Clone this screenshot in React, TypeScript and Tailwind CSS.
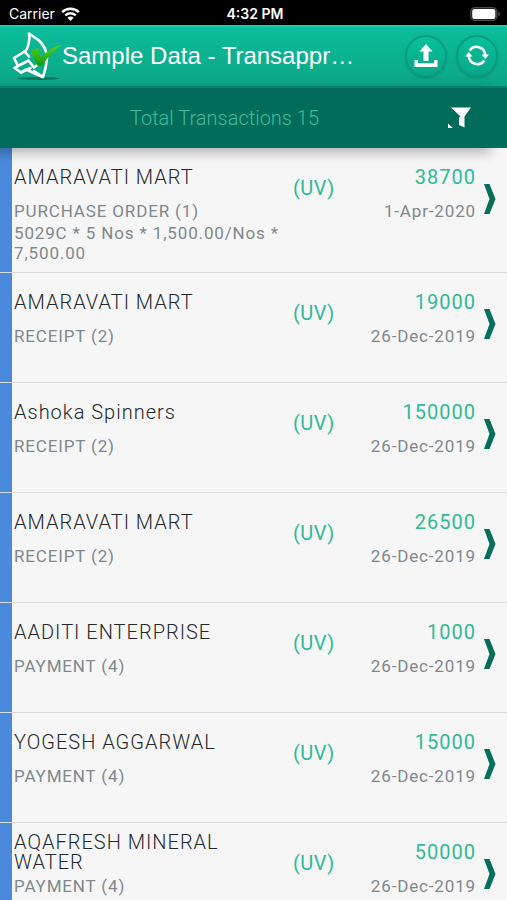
import React from 'react';

interface Transaction {
  id: number;
  party: string;
  voucher: string;
  detail?: string;
  amount: string;
  date: string;
}

const transactions: Transaction[] = [
  { id: 1, party: 'AMARAVATI MART', voucher: 'PURCHASE ORDER (1)', detail: '5029C * 5 Nos * 1,500.00/Nos * 7,500.00', amount: '38700', date: '1-Apr-2020' },
  { id: 2, party: 'AMARAVATI MART', voucher: 'RECEIPT (2)', amount: '19000', date: '26-Dec-2019' },
  { id: 3, party: 'Ashoka Spinners', voucher: 'RECEIPT (2)', amount: '150000', date: '26-Dec-2019' },
  { id: 4, party: 'AMARAVATI MART', voucher: 'RECEIPT (2)', amount: '26500', date: '26-Dec-2019' },
  { id: 5, party: 'AADITI ENTERPRISE', voucher: 'PAYMENT (4)', amount: '1000', date: '26-Dec-2019' },
  { id: 6, party: 'YOGESH AGGARWAL', voucher: 'PAYMENT (4)', amount: '15000', date: '26-Dec-2019' },
  { id: 7, party: 'AQAFRESH MINERAL WATER', voucher: 'PAYMENT (4)', amount: '50000', date: '26-Dec-2019' },
];

const StatusBar = () => (
  <div className="grid grid-cols-3 items-center h-[25px] shrink-0 pt-[3px] pl-[9px] pr-[6px] bg-black text-white text-sm leading-5 font-['Inter',sans-serif]">
    <div className="flex items-center gap-1.5">
      <span>Carrier</span>
      <svg width="19" height="14" viewBox="0 0 19 14" fill="none" stroke="white" strokeWidth="2.5">
        <path d="M1.2 5.2a11.8 11.8 0 0 1 16.6 0" />
        <path d="M4.2 8.4a7.5 7.5 0 0 1 10.6 0" />
        <path d="M9.5 14 6.4 10.8a4.4 4.4 0 0 1 6.2 0z" fill="white" stroke="none" />
      </svg>
    </div>
    <span className="text-center font-semibold">4:32 PM</span>
    <svg className="justify-self-end" width="31" height="14" viewBox="0 0 31 14">
      <rect x="0.8" y="0.8" width="26" height="12.4" rx="4" fill="none" stroke="#4a4a4a" strokeWidth="1.4" />
      <rect x="2.2" y="2" width="23.2" height="10" rx="2" fill="white" />
      <path d="M28.3 4.6c2.4.8 2.4 4 0 4.8z" fill="#4a4a4a" />
    </svg>
  </div>
);

const Logo = () => (
  <svg className="shrink-0" width="50" height="50" viewBox="0 0 50 50" fill="none">
    <defs>
      <linearGradient id="tick" x1="0" y1="0" x2="0" y2="1">
        <stop offset="0" stopColor="#5fd21c" />
        <stop offset="1" stopColor="#0b9a10" />
      </linearGradient>
    </defs>
    <ellipse cx="26" cy="47.500" rx="21" ry="1.4" fill="#04604c" opacity="0.7" />
    <g stroke="white" strokeWidth="2.6" strokeLinejoin="round" strokeLinecap="round">
      <path d="M13 21C16 17 18.500 9 17 2.500L27 9.500c5 5 8 10 8 17-.5 8-2 14-4 19.500L22 40" />
      <path d="M12.500 20.500 2 27l4 8L16.500 29.500 22 36.500 28 32" />
      <path d="M12.500 20.500 17 25.500" />
      <path d="M6 35 2.500 37l6.500 4.500 9.500-4.500" />
      <path d="M9 41.500 14 38.500 30.500 46" />
    </g>
    <path d="M18.500 20 26 17l3.500 9.500C35 19.500 41 16 50 13.500 41 20 35 26.500 30.500 35L25 34.500z" fill="url(#tick)" />
  </svg>
);

const UploadIcon = () => (
  <svg width="24" height="24" viewBox="0 0 24 24" fill="white">
    <path d="M12 0 18.500 7.500h-4V17h-5V7.500h-4z" />
    <path d="M.5 16h3.500v3.200h16V16h3.500v7H.5z" />
  </svg>
);

const SyncIcon = () => (
  <svg width="24" height="24" viewBox="0 0 24 24" fill="none" stroke="white" strokeWidth="2.600">
    <path d="M4.600 6.500A8.600 8.600 0 0 1 20.200 11" />
    <path d="M19.400 16.500A8.600 8.600 0 0 1 3.800 12" />
    <path d="M16.500 10.400H24L20.200 15z" fill="white" stroke="none" />
    <path d="M0 12.600h7.500L3.800 8z" fill="white" stroke="none" />
  </svg>
);

const RoundButton = ({ label, children }: { label: string; children: React.ReactNode }) => (
  <button
    aria-label={label}
    className="flex items-center justify-center size-[42px] shrink-0 rounded-full bg-linear-to-b from-[#07c09c] to-[#09a888] border-2 border-[#0a9c81] shadow-[0_1px_2px_rgba(0,80,60,0.35)]"
  >
    {children}
  </button>
);

const Header = () => (
  <header className="flex items-center h-[61px] shrink-0 pl-3 pr-[9px] pb-0.5 bg-linear-to-b from-[#0bbd9b] to-[#0ba686] border-t-2 border-[#14d0ad]">
    <Logo />
    <h1 className="grow min-w-0 truncate text-2xl text-white font-['Liberation_Sans',sans-serif]">Sample Data - Transappr…</h1>
    <div className="flex gap-[9px]">
      <RoundButton label="Upload"><UploadIcon /></RoundButton>
      <RoundButton label="Sync"><SyncIcon /></RoundButton>
    </div>
  </header>
);

const TotalBar = () => (
  <div className="relative z-10 grid grid-cols-[1fr_auto_1fr] items-center h-[62px] shrink-0 px-9 bg-[#006c59] border-t-2 border-[#08806a] shadow-[-16px_4px_12px_rgba(0,0,0,0.3)]">
    <p className="col-start-2 ml-[-58px] text-xl font-light text-[#3cbd9e]">Total Transactions 15</p>
    <button aria-label="Filter" className="justify-self-end">
      <svg width="23" height="24" viewBox="0 0 23 24" fill="white">
        <path d="M3 1.500h20L16.500 10.500V21.500L11 19v-7.500l1.500-1z" />
        <path d="M0 17.500 4.800 22H0z" />
      </svg>
    </button>
  </div>
);

const Row = ({ item }: { item: Transaction }) => (
  <li className="flex min-h-[110px] border-b border-[#dcdddf]">
    <div className="w-3 shrink-0 bg-[#4a89dc]" />
    <div className="grow grid grid-cols-[minmax(0,1fr)_43px_140px_31px] pl-0.5 py-[9px]">
      <div className="pr-2">
        <div className="flex items-center h-10">
          <h2 className="text-xl leading-5 font-light tracking-wider text-[#24292c]">{item.party}</h2>
        </div>
        <p className="mt-1 text-[17px] leading-5 tracking-wider text-[#80888c]">{item.voucher}</p>
        {item.detail && (
          <p className="mt-0.5 text-[17px] leading-5 tracking-wider text-[#80888c]">{item.detail}</p>
        )}
      </div>
      <span className="mt-[21px] text-xl leading-5 tracking-wide text-[#2fba98]">(UV)</span>
      <div className="text-right">
        <p className="text-xl leading-10 tracking-wider text-[#2fba98]">{item.amount}</p>
        <p className="mt-1 text-[17px] leading-5 tracking-wider text-[#80888c]">{item.date}</p>
      </div>
      <svg className="ml-2 mt-[26px]" width="12" height="32" viewBox="0 0 12 32" fill="#04705b">
        <path d="M0 1h5.500L11.500 16 5.500 31H0l5.500-15z" />
      </svg>
    </div>
  </li>
);

const App: React.FC = () => {
  return (
    <div className="flex flex-col h-screen overflow-hidden bg-[#f6f6f7] font-['Roboto',sans-serif]">
      <StatusBar />
      <Header />
      <TotalBar />
      <ul className="grow min-h-0 overflow-hidden">
        {transactions.map((item) => (
          <Row key={item.id} item={item} />
        ))}
      </ul>
    </div>
  );
};

export default App;
